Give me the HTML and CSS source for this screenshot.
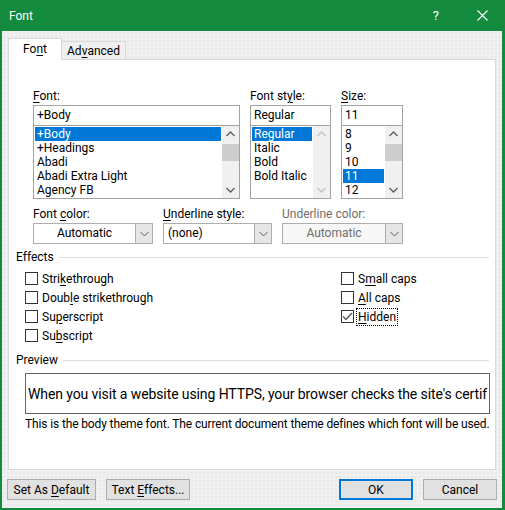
FILE: index.html
```html
<!DOCTYPE html>
<html>
<head>
<meta charset="utf-8">
<link rel="stylesheet" href="styles.css">
</head>
<body>
<div class="window">
  <div class="titlebar">
    <span class="title">Font</span>
    <span class="help">?</span>
    <svg class="close" width="11" height="11" viewBox="0 0 11 11"><path d="M0.5 0.5L10.5 10.5M10.5 0.5L0.5 10.5" stroke="#fff" stroke-width="1.1" fill="none"/></svg>
  </div>
  <div class="client">
    <div class="tabs">
      <div class="tab active"><span>Fo<u>n</u>t</span></div>
      <div class="tab"><span>Ad<u>v</u>anced</span></div>
    </div>
    <div class="page">
      <div class="pickers">
        <div class="picker">
          <div class="label"><u>F</u>ont:</div>
          <div class="input">+Body</div>
          <div class="list">
            <div class="items">
              <div class="item sel">+Body</div>
              <div class="item">+Headings</div>
              <div class="item">Abadi</div>
              <div class="item">Abadi Extra Light</div>
              <div class="item">Agency FB</div>
            </div>
            <div class="scroll">
              <svg class="arrow" width="17" height="17" viewBox="0 0 17 17"><path d="M4.5 10L8.5 6L12.5 10" stroke="#606060" stroke-width="1.4" fill="none"/></svg>
              <div class="track"><div class="thumb"></div></div>
              <svg class="arrow" width="17" height="17" viewBox="0 0 17 17"><path d="M4.5 7L8.5 11L12.5 7" stroke="#606060" stroke-width="1.4" fill="none"/></svg>
            </div>
          </div>
        </div>
        <div class="picker">
          <div class="label">Font st<u>y</u>le:</div>
          <div class="input">Regular</div>
          <div class="list">
            <div class="items">
              <div class="item sel">Regular</div>
              <div class="item">Italic</div>
              <div class="item">Bold</div>
              <div class="item">Bold Italic</div>
            </div>
            <div class="scroll">
              <svg class="arrow" width="17" height="17" viewBox="0 0 17 17"><path d="M4.5 10L8.5 6L12.5 10" stroke="#c4c4c4" stroke-width="1.4" fill="none"/></svg>
              <div class="track"></div>
              <svg class="arrow" width="17" height="17" viewBox="0 0 17 17"><path d="M4.5 7L8.5 11L12.5 7" stroke="#c4c4c4" stroke-width="1.4" fill="none"/></svg>
            </div>
          </div>
        </div>
        <div class="picker">
          <div class="label"><u>S</u>ize:</div>
          <div class="input">11</div>
          <div class="list">
            <div class="items">
              <div class="item">8</div>
              <div class="item">9</div>
              <div class="item">10</div>
              <div class="item sel">11</div>
              <div class="item">12</div>
            </div>
            <div class="scroll">
              <svg class="arrow" width="17" height="17" viewBox="0 0 17 17"><path d="M4.5 10L8.5 6L12.5 10" stroke="#606060" stroke-width="1.4" fill="none"/></svg>
              <div class="track"><div class="thumb"></div></div>
              <svg class="arrow" width="17" height="17" viewBox="0 0 17 17"><path d="M4.5 7L8.5 11L12.5 7" stroke="#606060" stroke-width="1.4" fill="none"/></svg>
            </div>
          </div>
        </div>
      </div>

      <div class="combos">
        <div class="picker">
          <div class="label">Font <u>c</u>olor:</div>
          <div class="combo">
            <span class="value center">Automatic</span>
            <span class="drop"><svg width="9" height="6" viewBox="0 0 9 6"><path d="M0.5 1L4.5 5L8.5 1" stroke="#606060" stroke-width="1" fill="none"/></svg></span>
          </div>
        </div>
        <div class="picker">
          <div class="label"><u>U</u>nderline style:</div>
          <div class="combo">
            <span class="value">(none)</span>
            <span class="drop"><svg width="9" height="6" viewBox="0 0 9 6"><path d="M0.5 1L4.5 5L8.5 1" stroke="#606060" stroke-width="1" fill="none"/></svg></span>
          </div>
        </div>
        <div class="picker disabled">
          <div class="label">Underline color:</div>
          <div class="combo">
            <span class="value center">Automatic</span>
            <span class="drop"><svg width="9" height="6" viewBox="0 0 9 6"><path d="M0.5 1L4.5 5L8.5 1" stroke="#606060" stroke-width="1" fill="none"/></svg></span>
          </div>
        </div>
      </div>

      <div class="group-head effects-head"><span>Effects</span><span class="rule"></span></div>
      <div class="checks">
        <div class="check"><span class="box"></span><span>Stri<u>k</u>ethrough</span></div>
        <div class="check"><span class="box"></span><span>S<u>m</u>all caps</span></div>
        <div class="check"><span class="box"></span><span>Doub<u>l</u>e strikethrough</span></div>
        <div class="check"><span class="box"></span><span><u>A</u>ll caps</span></div>
        <div class="check"><span class="box"></span><span>Su<u>p</u>erscript</span></div>
        <div class="check"><span class="box checked"><svg width="11" height="11" viewBox="0 0 11 11"><path d="M1 5.5L4 8.5L10 2" stroke="#555" stroke-width="1.3" fill="none"/></svg></span><span class="focus"><u>H</u>idden</span></div>
        <div class="check"><span class="box"></span><span>Su<u>b</u>script</span></div>
      </div>

      <div class="group-head preview-head"><span>Preview</span><span class="rule"></span></div>
      <div class="preview"><span>When you visit a website using HTTPS, your browser checks the site's certif</span></div>
      <div class="desc">This is the body theme font. The current document theme defines which font will be used.</div>
    </div>
    <div class="buttons">
      <div class="btn w89"><span>Set As <u>D</u>efault</span></div>
      <div class="btn w84"><span>Text <u>E</u>ffects...</span></div>
      <div class="spacer"></div>
      <div class="btn w74 default"><span>OK</span></div>
      <div class="btn w74"><span>Cancel</span></div>
    </div>
  </div>
</div>
</body>
</html>
```
FILE: styles.css
```css
html, body {
  margin: 0;
  padding: 0;
  background: #ffffff;
}
body {
  font-family: Roboto, "Noto Sans", sans-serif;
  font-size: 12px;
  color: #000;
}
u {
  text-decoration: underline;
  text-underline-offset: 2px;
}
.window {
  width: 505px;
  height: 510px;
  box-sizing: border-box;
  border: 2px solid #138a3e;
  border-top: 0;
  border-right-width: 3px;
  display: flex;
  flex-direction: column;
  background-color: #f0f0f0;
}
.titlebar {
  height: 31px;
  flex: none;
  background: #138a3e;
  color: #fff;
  display: flex;
  align-items: center;
  padding-left: 7px;
}
.title {
  font-size: 12px;
  flex: 1;
}
.help {
  font-size: 13px;
  margin-right: 38px;
}
.close {
  margin-right: 14px;
}
.client {
  flex: 1;
  display: flex;
  flex-direction: column;
  background-color: #f0f0f0;
  background-image: radial-gradient(circle, #e2e2e2 0.6px, transparent 0.9px);
  background-size: 4px 4px;
  padding-top: 7px;
}
.tabs {
  display: flex;
  align-items: flex-start;
  height: 22px;
  margin-left: 6px;
}
.tab {
  box-sizing: border-box;
  border: 1px solid #d9d9d9;
  border-bottom: 0;
  display: flex;
  align-items: center;
  justify-content: center;
}
.tab.active {
  width: 54px;
  height: 22px;
  background: #fff;
  position: relative;
  z-index: 1;
  padding-bottom: 2px;
}
.tab:not(.active) {
  width: 64px;
  height: 18px;
  margin-top: 3px;
  border-left: 0;
  background: #f0f0f0;
}
.page {
  width: 488px;
  height: 411px;
  box-sizing: border-box;
  margin-top: -1px;
  margin-left: 6px;
  background: #fff;
  border: 1px solid #d9d9d9;
}
.pickers {
  display: grid;
  grid-template-columns: 207px 81px 62px;
  column-gap: 10px;
  margin-top: 29px;
  padding-left: 24px;
}
.label {
  height: 15px;
  line-height: 15px;
  margin-bottom: 1px;
  white-space: nowrap;
}
.input {
  height: 21px;
  box-sizing: border-box;
  border: 1px solid #a3a3a3;
  padding-left: 3px;
  line-height: 19px;
}
.list {
  height: 74px;
  margin-top: -1px;
  box-sizing: border-box;
  border: 1px solid #a3a3a3;
  display: flex;
  background: #fff;
}
.items {
  flex: 1;
  padding: 1px 1px 0 1px;
  overflow: hidden;
}
.item {
  height: 14px;
  line-height: 14px;
  padding-left: 2px;
  white-space: nowrap;
}
.item.sel {
  background: #0078d7;
  color: #fff;
}
.scroll {
  width: 17px;
  flex: none;
  display: flex;
  flex-direction: column;
  background: #f0f0f0;
}
.arrow {
  display: block;
  flex: none;
}
.track {
  flex: 1;
  padding-top: 1px;
}
.thumb {
  height: 17px;
  background: #cdcdcd;
}
.combos {
  display: grid;
  grid-template-columns: 120px 109px 121px;
  column-gap: 10px;
  margin-top: 8px;
  padding-left: 24px;
}
.combo {
  height: 21px;
  box-sizing: border-box;
  border: 1px solid #adadad;
  display: flex;
  background: #fff;
}
.combo .value {
  flex: 1;
  line-height: 19px;
  padding-left: 4px;
}
.combo .value.center {
  text-align: center;
  padding-left: 0;
}
.combo .drop {
  width: 16px;
  background: #e5e5e5;
  border-left: 1px solid #adadad;
  display: flex;
  align-items: center;
  justify-content: center;
}
.disabled .label,
.disabled .value {
  color: #6d6d6d;
}
.disabled .combo {
  background: #f7f7f7;
}
.group-head {
  display: flex;
  align-items: center;
  height: 15px;
  line-height: 15px;
  padding-left: 7px;
  width: 473px;
}
.group-head .rule {
  flex: 1;
  height: 1px;
  background: #dcdcdc;
  margin-left: 5px;
}
.effects-head {
  margin-top: 6px;
}
.checks {
  display: grid;
  grid-template-columns: 316px auto;
  grid-auto-rows: 19px;
  margin-top: 4px;
  padding-left: 16px;
}
.check {
  display: flex;
  align-items: center;
  gap: 4px;
  white-space: nowrap;
}
.box {
  width: 13px;
  height: 13px;
  box-sizing: border-box;
  border: 1px solid #333;
  background: #fff;
  flex: none;
  display: flex;
  align-items: center;
  justify-content: center;
}
.focus {
  outline: 1px dotted #000;
  outline-offset: 1px;
}
.preview-head {
  margin-top: 8px;
}
.preview {
  margin-top: 5px;
  margin-left: 16px;
  width: 465px;
  height: 41px;
  box-sizing: border-box;
  border: 1px solid #646464;
  overflow: hidden;
  white-space: nowrap;
  display: flex;
  align-items: center;
  padding-left: 2px;
  font-size: 14px;
  letter-spacing: -0.1px;
}
.desc {
  margin-top: 3px;
  padding-left: 16px;
  line-height: 15px;
  white-space: nowrap;
  letter-spacing: -0.13px;
}
.buttons {
  display: flex;
  margin-top: 9px;
  padding: 0 5px;
  gap: 10px;
}
.spacer {
  flex: 1;
}
.btn {
  height: 21px;
  box-sizing: border-box;
  border: 1px solid #adadad;
  background: #e1e1e1;
  display: flex;
  align-items: center;
  justify-content: center;
  white-space: nowrap;
}
.btn.default {
  border: 2px solid #0078d7;
}
.w89 { width: 89px; }
.w84 { width: 84px; }
.w74 { width: 74px; }
```
